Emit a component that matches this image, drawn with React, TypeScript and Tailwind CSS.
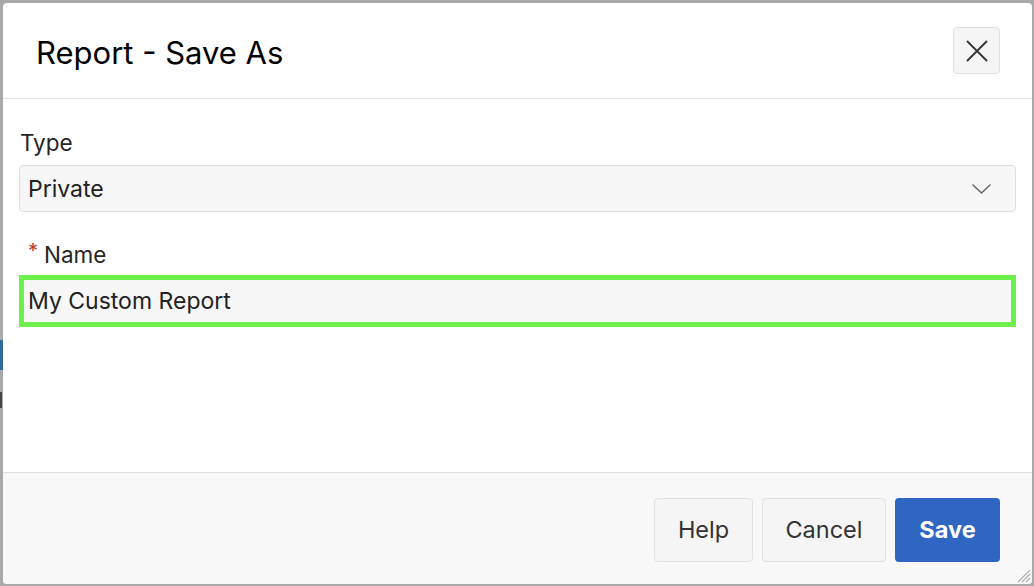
import React from 'react';

const font = { fontFamily: 'Inter, "Liberation Sans", sans-serif' };

const CloseIcon = () => (
  <svg width="22" height="22" viewBox="0 0 22 22" fill="none" stroke="#333" strokeWidth="1.8" strokeLinecap="round">
    <path d="M1.5 1.5 L20.5 20.5 M20.5 1.5 L1.5 20.5" />
  </svg>
);

const Chevron = () => (
  <svg width="19" height="10" viewBox="0 0 19 10" fill="none" stroke="#666" strokeWidth="1.5" strokeLinecap="round" strokeLinejoin="round">
    <path d="M1 1 L9.5 9 L18 1" />
  </svg>
);

const Grip = () => (
  <svg width="16" height="16" viewBox="0 0 16 16" stroke="#b0b0b0" strokeWidth="1.2">
    <path d="M15 3 L3 15 M15 7 L7 15 M15 11 L11 15" />
  </svg>
);

export default function App() {
  return (
    <div className="w-[1034px] h-[586px] flex bg-[#a9a9a9] overflow-hidden" style={font}>
      {/* page behind the overlay, left edge */}
      <div className="w-[3px] flex flex-col shrink-0">
        <div className="h-[340px]" />
        <div className="h-[30px] bg-[#2f6a9a]" />
        <div className="h-[22px]" />
        <div className="h-[16px] w-[2px] bg-[#444]" />
      </div>

      <div className="flex-1 flex flex-col">
        <div className="h-[3px] shrink-0" />

        {/* dialog */}
        <div className="flex-1 bg-white rounded-[4px] flex flex-col overflow-hidden">
          <div className="h-[96px] shrink-0 flex items-center justify-between pl-[33px] pr-[32px] border-b border-[#e2e2e2]">
            <h1 className="text-[31px] text-black leading-none mt-[3px]">Report - Save As</h1>
            <button className="w-[47px] h-[47px] flex items-center justify-center bg-[#f5f5f5] border border-[#e0e0e0] rounded-[4px]">
              <CloseIcon />
            </button>
          </div>

          <div className="flex-1 px-4 pt-[31px]">
            <div className="text-[22.5px] leading-[26px] text-[#262626] pl-[1px]">Type</div>
            <div className="mt-[9px] h-[47px] flex items-center justify-between bg-[#f7f7f7] border border-[#dedede] rounded-[4px] pl-[8px] pr-[24px]">
              <span className="text-[23px] text-[#222] mt-[1px]">Private</span>
              <Chevron />
            </div>

            <div className="mt-[30px] flex items-center text-[22.5px] leading-[26px] text-[#262626] pl-[9px]">
              <span className="text-[#c0392b] text-[20px] mr-[6px] -mt-[8px]">*</span>
              <span>Name</span>
            </div>
            <div className="mt-[7px] h-[52px] flex items-center bg-[#f7f7f7] border-[5px] border-[#6cf04c] pl-[4px]">
              <span className="text-[23px] text-[#222] mt-[1px]">My Custom Report</span>
            </div>
          </div>

          <div className="h-[112px] shrink-0 bg-[#f8f8f8] border-t border-[#dfdfdf] flex flex-col">
            <div className="flex justify-end gap-[9px] pr-[32px] pt-[25px]">
              <button className="w-[99px] h-[64px] bg-[#f5f5f5] border border-[#e0e0e0] rounded-[4px] text-[23.5px] text-[#333]">Help</button>
              <button className="w-[124px] h-[64px] bg-[#f5f5f5] border border-[#e0e0e0] rounded-[4px] text-[23.5px] text-[#333]">Cancel</button>
              <button className="w-[105px] h-[64px] bg-[#2e66c1] rounded-[4px] text-[23.5px] font-bold text-white">Save</button>
            </div>
            <div className="flex-1 flex justify-end items-end pr-[1px] pb-[1px]">
              <Grip />
            </div>
          </div>
        </div>

        <div className="h-[2px] shrink-0" />
      </div>

      <div className="w-[2px] shrink-0" />
    </div>
  );
}
